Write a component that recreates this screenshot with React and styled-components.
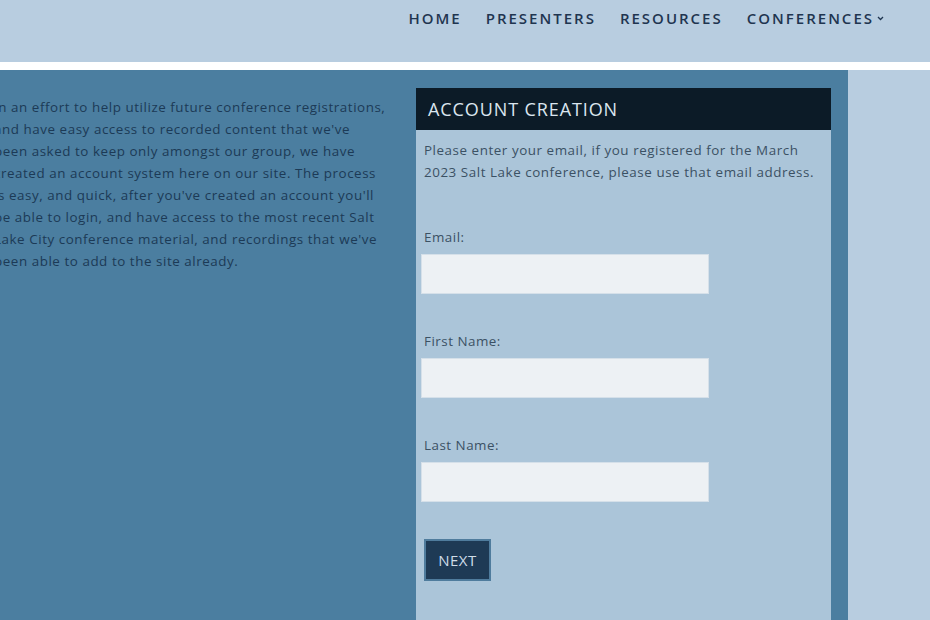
import React from 'react';
import styled, { createGlobalStyle } from 'styled-components';

const GlobalStyle = createGlobalStyle`
  html, body {
    margin: 0;
    padding: 0;
    background: #b8cde0;
    font-family: "Open Sans", "Liberation Sans", sans-serif;
    overflow: hidden;
  }
`;

const Page = styled.div`
  width: 930px;
  height: 620px;
  display: flex;
  flex-direction: column;
  background: #b8cde0;
  overflow: hidden;
`;

const Header = styled.header`
  height: 70px;
  display: flex;
  justify-content: flex-end;
  align-items: flex-start;
  padding-right: 46px;
  box-sizing: border-box;
  border-bottom: 8px solid #ffffff;
`;

const Nav = styled.nav`
  display: flex;
  gap: 24px;
  padding-top: 8px;
`;

const NavLink = styled.a`
  font-family: "Open Sans", sans-serif;
  font-size: 15px;
  font-weight: 600;
  letter-spacing: 2px;
  color: #1f3550;
  text-transform: uppercase;
  display: flex;
  align-items: center;
  gap: 3px;
  line-height: 20px;
`;

const Chevron = styled.svg`
  width: 7px;
  height: 5px;
`;

const Main = styled.main`
  flex: 1;
  display: flex;
`;

const BluePanel = styled.section`
  width: 848px;
  background: #4b7ea0;
  display: flex;
  align-items: flex-start;
  padding-top: 18px;
  box-sizing: border-box;
`;

const Intro = styled.p`
  margin: 8px 0 0 -6px;
  width: 422px;
  font-size: 13.4px;
  line-height: 22px;
  letter-spacing: 0.55px;
  color: #1c3a56;
  white-space: nowrap;
`;

const Card = styled.div`
  width: 415px;
  align-self: stretch;
  background: #abc5d9;
  display: flex;
  flex-direction: column;
`;

const CardTitle = styled.h2`
  margin: 0;
  height: 42px;
  background: #0c1b27;
  color: #dbe6ef;
  font-size: 18px;
  font-weight: 400;
  letter-spacing: 0.9px;
  display: flex;
  align-items: center;
  padding-left: 12px;
`;

const CardBody = styled.div`
  padding: 9px 0 0 8px;
  display: flex;
  flex-direction: column;
`;

const Note = styled.p`
  margin: 0 0 44px;
  font-size: 13.4px;
  line-height: 22px;
  letter-spacing: 0.55px;
  color: #3b5164;
  white-space: nowrap;
`;

const Field = styled.label`
  display: flex;
  flex-direction: column;
  margin-bottom: 37px;
`;

const LabelText = styled.span`
  font-size: 13.4px;
  line-height: 20px;
  letter-spacing: 0.5px;
  color: #3b5164;
  margin-bottom: 7px;
`;

const Input = styled.input`
  width: 288px;
  height: 40px;
  box-sizing: border-box;
  margin-left: -3px;
  background: #edf1f4;
  border: 1px solid #d5e0e9;
  outline: none;
`;

const Button = styled.button`
  width: 67px;
  height: 42px;
  background: #1e3a55;
  border: 2px solid #4f7c9d;
  color: #cfdce8;
  font-family: "Open Sans", sans-serif;
  font-size: 15px;
  letter-spacing: 0.5px;
  padding: 0;
`;

const Side = styled.aside`
  flex: 1;
  background: #b8cde0;
`;

const links = ['Home', 'Presenters', 'Resources', 'Conferences'];

export default function App() {
  return (
    <Page>
      <GlobalStyle />
      <Header>
        <Nav>
          {links.map((l, i) => (
            <NavLink key={l}>
              {l}
              {i === links.length - 1 && (
                <Chevron viewBox="0 0 7 5">
                  <path d="M1 1l2.5 2.5L6 1" fill="none" stroke="#1f3550" strokeWidth="1.3" />
                </Chevron>
              )}
            </NavLink>
          ))}
        </Nav>
      </Header>
      <Main>
        <BluePanel>
          <Intro>
            In an effort to help utilize future conference registrations,<br />
            and have easy access to recorded content that we've<br />
            been asked to keep only amongst our group, we have<br />
            created an account system here on our site. The process<br />
            is easy, and quick, after you've created an account you'll<br />
            be able to login, and have access to the most recent Salt<br />
            Lake City conference material, and recordings that we've<br />
            been able to add to the site already.
          </Intro>
          <Card>
            <CardTitle>ACCOUNT CREATION</CardTitle>
            <CardBody>
              <Note>
                Please enter your email, if you registered for the March<br />
                2023 Salt Lake conference, please use that email address.
              </Note>
              <Field>
                <LabelText>Email:</LabelText>
                <Input type="email" />
              </Field>
              <Field>
                <LabelText>First Name:</LabelText>
                <Input type="text" />
              </Field>
              <Field>
                <LabelText>Last Name:</LabelText>
                <Input type="text" />
              </Field>
              <Button>NEXT</Button>
            </CardBody>
          </Card>
        </BluePanel>
        <Side />
      </Main>
    </Page>
  );
}
